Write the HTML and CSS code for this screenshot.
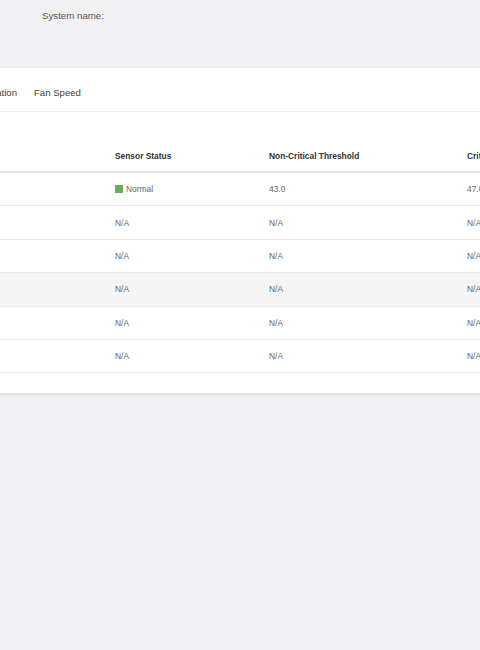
FILE: index.html
```html
<!DOCTYPE html>
<html lang="en">
<head>
    <meta charset="UTF-8">
    <meta name="viewport" content="width=device-width, initial-scale=1.0">
    <title>Sensor Readings</title>
    <link rel="stylesheet" href="styles.css">
</head>
<body>
    <div class="page">
        <div class="sys-header">
            <span class="sys-label">System name:</span>
        </div>

        <div class="card">
            <div class="tabs">
                <div class="tabs-prev">
                    <span class="tab">Temperature</span>
                    <span class="tab">Voltage</span>
                    <span class="tab">Power Information</span>
                </div>
                <span class="tab">Fan Speed</span>
            </div>

            <div class="toolbar"></div>

            <table class="sensor-table">
                <thead>
                    <tr>
                        <th class="col-name">Sensor Name</th>
                        <th class="col-status">Sensor Status</th>
                        <th class="col-noncrit">Non-Critical Threshold</th>
                        <th>Critical Threshold</th>
                    </tr>
                </thead>
                <tbody>
                    <tr>
                        <td>Inlet Temp</td>
                        <td><span class="dot-ok"></span>Normal</td>
                        <td>43.0</td>
                        <td>47.0</td>
                    </tr>
                    <tr>
                        <td>Outlet Temp</td>
                        <td>N/A</td>
                        <td>N/A</td>
                        <td>N/A</td>
                    </tr>
                    <tr>
                        <td>CPU0 Temp</td>
                        <td>N/A</td>
                        <td>N/A</td>
                        <td>N/A</td>
                    </tr>
                    <tr class="row-hover">
                        <td>CPU1 Temp</td>
                        <td>N/A</td>
                        <td>N/A</td>
                        <td>N/A</td>
                    </tr>
                    <tr>
                        <td>DIMM Temp</td>
                        <td>N/A</td>
                        <td>N/A</td>
                        <td>N/A</td>
                    </tr>
                    <tr>
                        <td>PCH Temp</td>
                        <td>N/A</td>
                        <td>N/A</td>
                        <td>N/A</td>
                    </tr>
                </tbody>
            </table>
        </div>
    </div>
</body>
</html>
```

FILE: styles.css
```css
html, body {
    margin: 0;
    padding: 0;
    overflow: hidden;
}
body {
    font-family: "Liberation Sans", Arial, sans-serif;
    background: #f1f1f3;
    color: #555;
    height: 650px;
}
.page {
    margin-left: -300px;
    width: 1100px;
}
.sys-header {
    height: 67px;
    padding-left: 342px;
    box-sizing: border-box;
    padding-top: 5px;
}
.sys-label {
    font-size: 9.7px;
    color: #555;
}
.card {
    background: #fff;
    box-shadow: 0 1px 3px rgba(0,0,0,0.12);
    padding-bottom: 20px;
    margin-top: 1px;
}
.tabs {
    display: flex;
    gap: 17px;
    height: 37px;
    padding-top: 6px;
    align-items: center;
    border-bottom: 1px solid #f0f0f0;
    font-size: 9.6px;
    color: #444;
}
.tabs-prev {
    flex: 0 0 317px;
    display: flex;
    justify-content: flex-end;
    gap: 17px;
    white-space: nowrap;
}
.toolbar {
    height: 28px;
}
.sensor-table {
    margin-left: 20px;
    width: 1060px;
    border-collapse: collapse;
    font-size: 8.4px;
    table-layout: fixed;
}
.sensor-table th {
    text-align: left;
    font-weight: bold;
    color: #333;
    height: 31px;
    padding: 0 8px;
    border-bottom: 2px solid #e6e6e6;
}
.sensor-table td {
    height: 32.4px;
    padding: 0 8px;
    border-bottom: 1px solid #e8e8e8;
    color: #666;
}
.col-name {
    width: 371px;
}
.col-status {
    width: 138px;
}
.col-noncrit {
    width: 182px;
}
.row-hover td {
    background: #f5f5f5;
}
.dot-ok {
    display: inline-block;
    width: 8px;
    height: 8px;
    background: #6aad55;
    margin-right: 3px;
    vertical-align: -1px;
}
```
